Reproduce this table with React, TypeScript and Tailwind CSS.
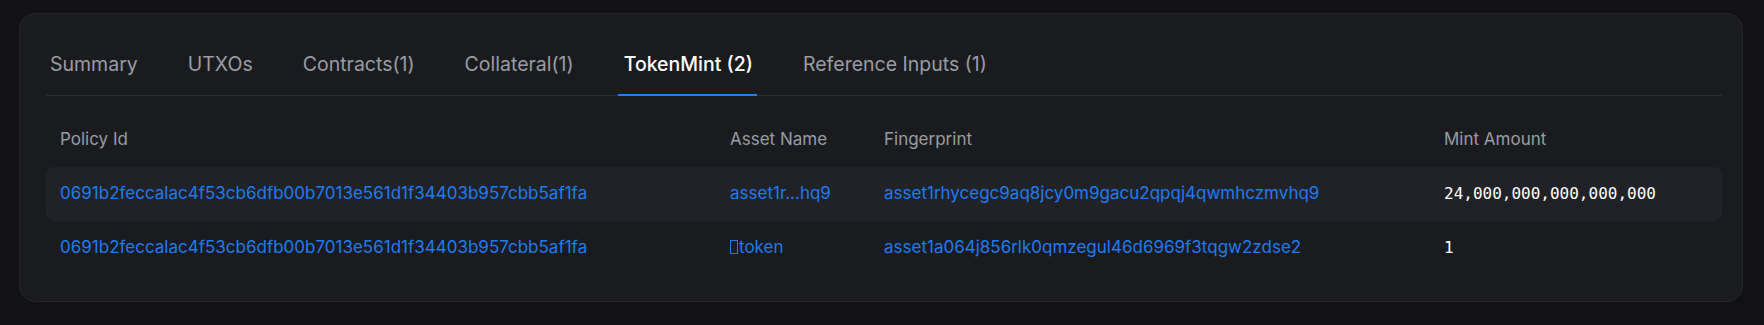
import React, { useState } from "react";

const tabs = ["Summary", "UTXOs", "Contracts(1)", "Collateral(1)", "TokenMint (2)", "Reference Inputs (1)"];

const rows = [
  {
    policy: "0691b2feccalac4f53cb6dfb00b7013e561d1f34403b957cbb5af1fa",
    asset: "asset1r...hq9",
    fingerprint: "asset1rhycegc9aq8jcy0m9gacu2qpqj4qwmhczmvhq9",
    amount: "24,000,000,000,000,000",
    tofu: false,
  },
  {
    policy: "0691b2feccalac4f53cb6dfb00b7013e561d1f34403b957cbb5af1fa",
    asset: "token",
    fingerprint: "asset1a064j856rlk0qmzegul46d6969f3tqgw2zdse2",
    amount: "1",
    tofu: true,
  },
];

export default function App() {
  const [active, setActive] = useState(4);

  return (
    <main className="min-h-[325px] bg-[#111115] pt-[13px] pl-[19px] pr-[21px] font-['Inter',sans-serif]">
      <div className="h-[289px] rounded-2xl border border-[#25262b] bg-[#1a1b1f] pl-[26px] pr-[20px] pt-[27px]">
        <div className="flex gap-[42px] border-b border-[#2c2d32]">
          {tabs.map((t, i) => (
            <button
              key={t}
              onClick={() => setActive(i)}
              className={`relative px-[4px] pt-[9px] pb-[17px] text-[19.5px] leading-[28px] ${
                i === active ? "font-medium text-white" : "text-[#9a9da5]"
              }`}
            >
              {t}
              {i === active && <span className="absolute -left-[2px] right-0 -bottom-px h-[2px] bg-[#1d7ff2]" />}
            </button>
          ))}
        </div>

        <div className="mt-[17px] text-[17px]">
          <div className="grid h-[54px] grid-cols-[670px_154px_560px_1fr] items-center text-[#9a9ca3]">
            <div className="pl-[14px]">Policy Id</div>
            <div className="pl-[14px]">Asset Name</div>
            <div className="pl-[14px]">Fingerprint</div>
            <div className="pl-[14px]">Mint Amount</div>
          </div>
          {rows.map((r, i) => (
            <div
              key={i}
              className={`grid h-[54px] grid-cols-[670px_154px_560px_1fr] items-center rounded-lg ${
                i === 0 ? "bg-[#212227]" : ""
              }`}
            >
              <div className="pl-[14px] text-[#1f7cf0]">{r.policy}</div>
              <div className="pl-[14px] text-[#1f7cf0]">
                {r.tofu && (
                  <span className="mr-[1px] inline-block h-[14px] w-[8px] border-[1.5px] border-[#1f7cf0] align-[-1px]" />
                )}
                {r.asset}
              </div>
              <div className="pl-[14px] text-[#1f7cf0]">{r.fingerprint}</div>
              <div className="pl-[14px] font-['DejaVu_Sans_Mono',monospace] text-[16px] text-white">{r.amount}</div>
            </div>
          ))}
        </div>
      </div>
    </main>
  );
}
